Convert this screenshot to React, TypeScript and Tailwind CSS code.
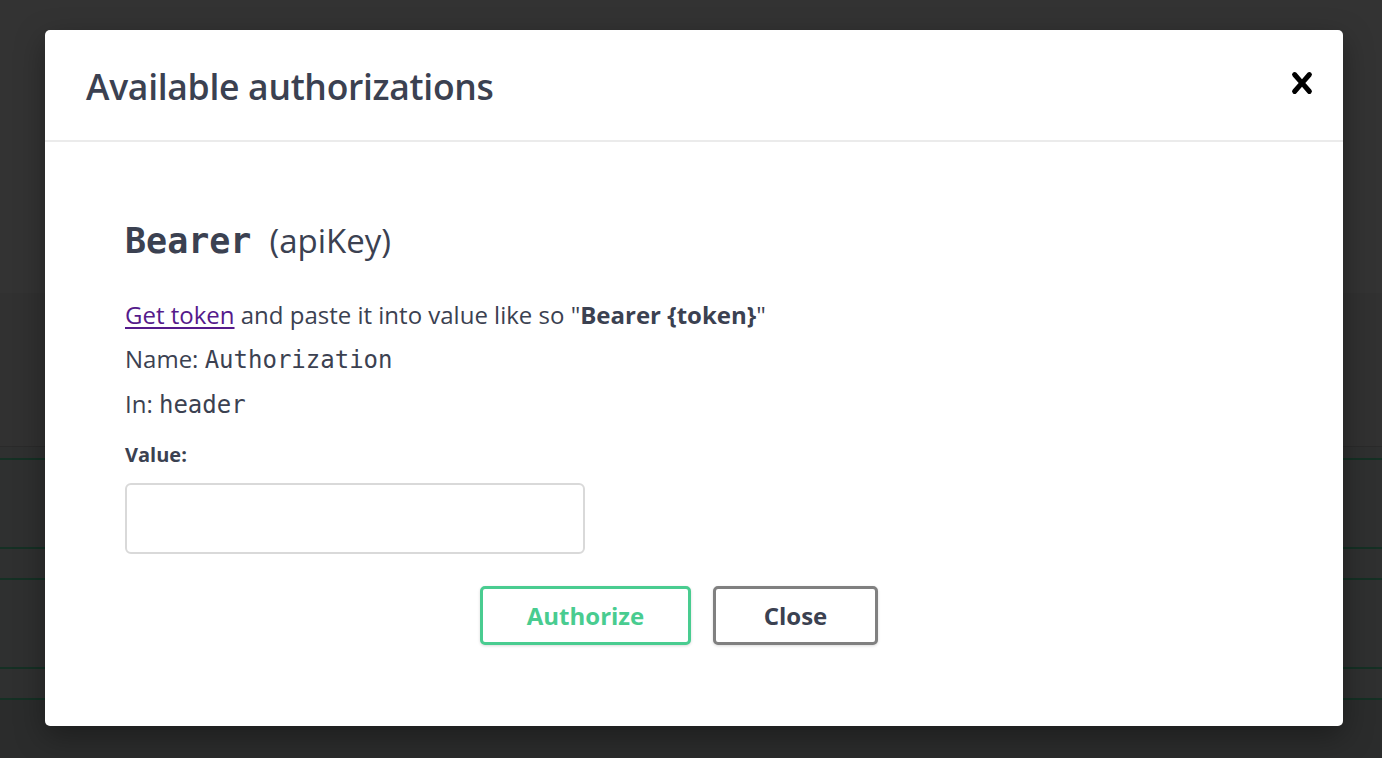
import React from 'react';

const sans = "font-['Open_Sans',sans-serif]";
const mono = "font-['DejaVu_Sans_Mono',monospace]";

function CloseIcon() {
  return (
    <svg width="42" height="42" viewBox="0 0 20 20" aria-hidden="true">
      <path
        fill="#000"
        d="M14.348 14.849a1.2 1.2 0 0 1-1.697 0L10 11.819l-2.651 3.029a1.2 1.2 0 1 1-1.697-1.697l2.758-3.15-2.759-3.152a1.2 1.2 0 1 1 1.697-1.697L10 8.183l2.651-3.031a1.2 1.2 0 1 1 1.697 1.697l-2.758 3.152 2.758 3.15a1.2 1.2 0 0 1 0 1.698z"
      />
    </svg>
  );
}

function Backdrop() {
  return (
    <div className="flex h-full flex-col">
      <div className="h-[293px] bg-[#333333]" />
      <div className="h-[153px] bg-[#313131]" />
      <div className="h-px bg-[#2a2a2a]" />
      <div className="h-[11px] bg-[#2f3030]" />
      <div className="h-[2px] bg-[#153024]" />
      <div className="h-[87px] bg-[#2f3030]" />
      <div className="h-[2px] bg-[#153024]" />
      <div className="h-[29px] bg-[#2f3030]" />
      <div className="h-[2px] bg-[#153024]" />
      <div className="h-[87px] bg-[#2f3030]" />
      <div className="h-[2px] bg-[#153024]" />
      <div className="h-[29px] bg-[#2f3030]" />
      <div className="h-[2px] bg-[#153024]" />
      <div className="flex-1 bg-[#2b2c2c]" />
    </div>
  );
}

export default function App() {
  return (
    <div className={`relative h-[758px] w-full overflow-hidden ${sans}`}>
      <Backdrop />

      <div className="absolute left-[45px] top-[30px] flex h-[696px] w-[1298px] flex-col rounded-[5px] bg-white shadow-[0_10px_30px_rgba(0,0,0,0.35)]">
        <div className="flex h-[112px] shrink-0 items-center justify-between border-b-2 border-[#ebebeb] pl-[41px] pr-[20px]">
          <h3 className="pt-[4px] text-[35.5px] font-semibold tracking-[-0.3px] text-[#3b4151]">
            Available authorizations
          </h3>
          <button className="flex items-center justify-center pb-[4px]">
            <CloseIcon />
          </button>
        </div>

        <div className="flex flex-col pl-[80px] pt-[74px] text-[#3b4151]">
          <h4 className="flex h-[50px] items-center gap-[18px]">
            <span className={`${mono} text-[35px] font-bold`}>Bearer</span>
            <span className="text-[33px]">(apiKey)</span>
          </h4>

          <div className="mt-[27px] flex flex-col text-[24px]">
            <p className="leading-[44px]">
              <a href="#" className="text-[#551a8b] underline underline-offset-[3px]">Get token</a>
              {' '}and paste it into value like so "<strong>Bearer {'{token}'}</strong>"
            </p>
            <p className="leading-[44px]">
              Name: <code className={`${mono} text-[24px]`}>Authorization</code>
            </p>
            <p className="leading-[44px]">
              In: <code className={`${mono} text-[24px]`}>header</code>
            </p>
          </div>

          <label className="mt-[13px] h-[30px] text-[20px] font-bold leading-[30px]">Value:</label>

          <input
            type="text"
            className="mt-[13px] h-[71px] w-[460px] rounded-[6px] border-2 border-[#d9d9d9] px-[14px] text-[20px] outline-none"
          />
        </div>

        <div className="mt-[32px] flex justify-center gap-[22px] pr-[30px]">
          <button className="h-[59px] w-[211px] rounded-[5px] border-[3px] border-[#49cc90] bg-white text-[24px] font-bold text-[#49cc90] shadow-[0_1px_3px_rgba(0,0,0,0.15)]">
            Authorize
          </button>
          <button className="h-[59px] w-[165px] rounded-[5px] border-[3px] border-[#808080] bg-white text-[24px] font-bold text-[#3b4151] shadow-[0_1px_3px_rgba(0,0,0,0.15)]">
            Close
          </button>
        </div>
      </div>
    </div>
  );
}
